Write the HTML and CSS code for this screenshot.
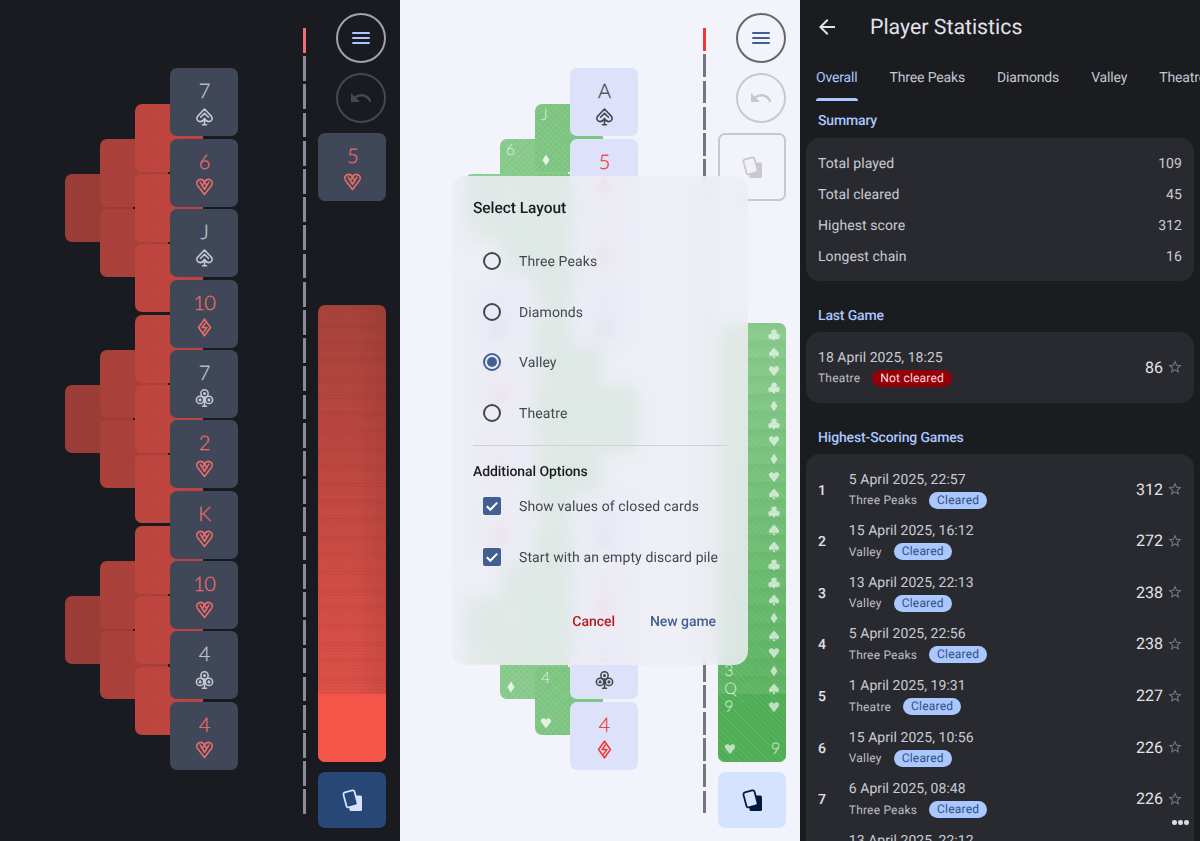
FILE: index.html
```html
<!DOCTYPE html>
<html lang="en">
<head>
<meta charset="utf-8">
<title>Solitaire screens</title>
<link rel="stylesheet" href="styles.css">
</head>
<body>
<svg class="defs" width="0" height="0" aria-hidden="true">
  <symbol id="o-spade" viewBox="0 0 24 24"><path d="M12 2.5 20.5 11.5C23 14.5 21 18.5 17.5 18.5 15.5 18.5 13.5 17 12 14.5 10.5 17 8.5 18.5 6.5 18.5 3 18.5 1 14.5 3.5 11.5ZM7 13 12 8 17 13M12 14.5V22.5M9.5 22.5H14.5"/></symbol>
  <symbol id="o-heart" viewBox="0 0 24 24"><path d="M12 22 3 10.5C.8 7.5 3 3 7 3 9.2 3 11 4.5 12 6.5 13 4.5 14.8 3 17 3 21 3 23.2 7.5 21 10.5ZM6.5 6.5 12 15.5 17.5 6.5M12 6.5 9.5 10.5 12 6.5 14.5 10.5"/></symbol>
  <symbol id="o-diamond" viewBox="0 0 24 24"><path d="M12 1.5 19.5 12 12 22.5 4.5 12ZM13 6.5 9 12H15L11 17.5"/></symbol>
  <symbol id="o-club" viewBox="0 0 24 24"><circle cx="12" cy="6.8" r="4.6"/><circle cx="6.4" cy="15" r="4.6"/><circle cx="17.6" cy="15" r="4.6"/><circle cx="12" cy="6.8" r=".9"/><circle cx="6.4" cy="15" r=".9"/><circle cx="17.6" cy="15" r=".9"/><path d="M12 12V23M9.5 23H14.5"/></symbol>
  <symbol id="f-spade" viewBox="0 0 24 24"><path d="M12 1 21 11C24 15 21 19 17 18.5 15.5 18.3 14 17.5 13 16L14.5 22.5H9.500L11 16C10 17.5 8.500 18.300 7 18.500 3 19 0 15 3 11Z"/></symbol>
  <symbol id="f-heart" viewBox="0 0 24 24"><path d="M12 22.500 3 11C0 7 3 2.500 7 2.500 9 2.500 11 3.500 12 6 13 3.500 15 2.500 17 2.500 21 2.500 24 7 21 11Z"/></symbol>
  <symbol id="f-diamond" viewBox="0 0 24 24"><path d="M12 1 19 12 12 23 5 12Z"/></symbol>
  <symbol id="f-club" viewBox="0 0 24 24"><circle cx="12" cy="6.500" r="5.500"/><circle cx="6" cy="15" r="5.500"/><circle cx="18" cy="15" r="5.500"/><path d="M11 12H13L14.500 22.500H9.500Z"/></symbol>
  <symbol id="i-undo" viewBox="0 0 24 24"><path d="M12.500 8c-2.650 0-5.050.99-6.900 2.600L2 7v9h9l-3.620-3.620c1.390-1.160 3.160-1.880 5.120-1.880 3.540 0 6.550 2.310 7.600 5.500l2.370-.78C21.080 11.030 17.150 8 12.500 8z"/></symbol>
  <symbol id="i-deck" viewBox="0 0 24 24"><path class="deck-back" d="M10 7.500H20.500A1.500 1.500 0 0 1 22 9V21.500A1.500 1.500 0 0 1 20.500 23H11A1.500 1.500 0 0 1 9.500 21.500V19.500Z"/><rect class="deck-front" x="4.800" y="3.200" width="11.500" height="15.500" rx="2" transform="rotate(-15 10.500 11)"/></symbol>
  <symbol id="i-star" viewBox="0 0 24 24"><path d="M22 9.240l-7.190-.62L12 2 9.190 8.630 2 9.240l5.460 4.730L5.820 21 12 17.270 18.180 21l-1.630-7.030L22 9.240zM12 15.400l-3.760 2.270 1-4.280-3.320-2.880 4.380-.38L12 6.100l1.710 4.040 4.380.38-3.320 2.880 1 4.280L12 15.400z"/></symbol>
</svg>

<main class="screens">

<section class="game dark">
  <div class="board">
    <div class="card back c1 r4"></div><div class="card back c1 r10"></div><div class="card back c1 r16"></div>
    <div class="card back c2 r3"></div><div class="card back c2 r5"></div><div class="card back c2 r9"></div><div class="card back c2 r11"></div><div class="card back c2 r15"></div><div class="card back c2 r17"></div>
    <div class="card back c3 r2"></div><div class="card back c3 r4"></div><div class="card back c3 r6"></div><div class="card back c3 r8"></div><div class="card back c3 r10"></div><div class="card back c3 r12"></div><div class="card back c3 r14"></div><div class="card back c3 r16"></div><div class="card back c3 r18"></div>
    <div class="card open c4 r1"><span class="rank">7</span><svg class="suit"><use href="#o-spade"/></svg></div>
    <div class="card open red c4 r3"><span class="rank">6</span><svg class="suit"><use href="#o-heart"/></svg></div>
    <div class="card open c4 r5"><span class="rank">J</span><svg class="suit"><use href="#o-spade"/></svg></div>
    <div class="card open red c4 r7"><span class="rank">10</span><svg class="suit"><use href="#o-diamond"/></svg></div>
    <div class="card open c4 r9"><span class="rank">7</span><svg class="suit"><use href="#o-club"/></svg></div>
    <div class="card open red c4 r11"><span class="rank">2</span><svg class="suit"><use href="#o-heart"/></svg></div>
    <div class="card open red c4 r13"><span class="rank">K</span><svg class="suit"><use href="#o-heart"/></svg></div>
    <div class="card open red c4 r15"><span class="rank">10</span><svg class="suit"><use href="#o-heart"/></svg></div>
    <div class="card open c4 r17"><span class="rank">4</span><svg class="suit"><use href="#o-club"/></svg></div>
    <div class="card open red c4 r19"><span class="rank">4</span><svg class="suit"><use href="#o-heart"/></svg></div>
  </div>
  <div class="dashes"><div class="dash-first"></div></div>
  <div class="side">
    <button class="round menu"><span></span><span></span><span></span></button>
    <button class="round undo"><svg class="undo-icon"><use href="#i-undo"/></svg></button>
    <div class="card open red discard"><span class="rank">5</span><svg class="suit"><use href="#o-heart"/></svg></div>
    <div class="stock stock-22">
      <div class="row"></div><div class="row"></div><div class="row"></div><div class="row"></div><div class="row"></div><div class="row"></div><div class="row"></div><div class="row"></div><div class="row"></div><div class="row"></div><div class="row"></div>
      <div class="row"></div><div class="row"></div><div class="row"></div><div class="row"></div><div class="row"></div><div class="row"></div><div class="row"></div><div class="row"></div><div class="row"></div><div class="row"></div><div class="row"></div>
      <div class="last"></div>
    </div>
    <button class="deal"><svg class="deck-icon"><use href="#i-deck"/></svg></button>
  </div>
</section>

<section class="game light">
  <div class="board">
    <div class="card back c1 r4"><span>K</span><svg class="mini"><use href="#f-club"/></svg></div>
    <div class="card open c1 r7"><span class="rank">8</span><svg class="suit"><use href="#o-club"/></svg></div>
    <div class="card open red c1 r9"><span class="rank">3</span><svg class="suit"><use href="#o-heart"/></svg></div>
    <div class="card open red c1 r11"><span class="rank">9</span><svg class="suit"><use href="#o-diamond"/></svg></div>
    <div class="card open red c1 r13"><span class="rank">2</span><svg class="suit"><use href="#o-heart"/></svg></div>
    <div class="card back c1 r16"><span>5</span><svg class="mini"><use href="#f-club"/></svg></div>
    <div class="card back c2 r3"><span>6</span><svg class="mini"><use href="#f-spade"/></svg></div>
    <div class="card back c2 r5"><span>2</span><svg class="mini"><use href="#f-club"/></svg></div>
    <div class="card back c2 r15"><span>8</span><svg class="mini"><use href="#f-spade"/></svg></div>
    <div class="card back c2 r17"><span>K</span><svg class="mini"><use href="#f-diamond"/></svg></div>
    <div class="card back c3 r2"><span>J</span><svg class="mini"><use href="#f-diamond"/></svg></div>
    <div class="card back c3 r4"><span>7</span><svg class="mini"><use href="#f-heart"/></svg></div>
    <div class="card back c3 r6"><span>3</span><svg class="mini"><use href="#f-club"/></svg></div>
    <div class="card back c3 r8"><span>Q</span><svg class="mini"><use href="#f-spade"/></svg></div>
    <div class="card back c3 r10"><span>A</span><svg class="mini"><use href="#f-heart"/></svg></div>
    <div class="card back c3 r12"><span>6</span><svg class="mini"><use href="#f-club"/></svg></div>
    <div class="card back c3 r14"><span>10</span><svg class="mini"><use href="#f-spade"/></svg></div>
    <div class="card back c3 r16"><span>J</span><svg class="mini"><use href="#f-diamond"/></svg></div>
    <div class="card back c3 r18"><span>4</span><svg class="mini"><use href="#f-heart"/></svg></div>
    <div class="card open c4 r1"><span class="rank">A</span><svg class="suit"><use href="#o-spade"/></svg></div>
    <div class="card open red c4 r3"><span class="rank">5</span><svg class="suit"><use href="#o-diamond"/></svg></div>
    <div class="card open red c4 r5"><span class="rank">7</span><svg class="suit"><use href="#o-heart"/></svg></div>
    <div class="card open c4 r7"><span class="rank">9</span><svg class="suit"><use href="#o-club"/></svg></div>
    <div class="card back c4 r10"><span>K</span><svg class="mini"><use href="#f-spade"/></svg></div>
    <div class="card open c4 r13"><span class="rank">Q</span><svg class="suit"><use href="#o-spade"/></svg></div>
    <div class="card open red c4 r15"><span class="rank">10</span><svg class="suit"><use href="#o-heart"/></svg></div>
    <div class="card open c4 r17"><span class="rank">8</span><svg class="suit"><use href="#o-club"/></svg></div>
    <div class="card open red c4 r19"><span class="rank">4</span><svg class="suit"><use href="#o-diamond"/></svg></div>
  </div>
  <div class="dashes"><div class="dash-first"></div></div>
  <div class="side">
    <button class="round menu"><span></span><span></span><span></span></button>
    <button class="round undo"><svg class="undo-icon"><use href="#i-undo"/></svg></button>
    <div class="empty-pile"><svg class="deck-icon"><use href="#i-deck"/></svg></div>
    <div class="stock stock-21">
      <div class="row"><span>2</span><svg class="mini"><use href="#f-club"/></svg></div>
      <div class="row"><span>K</span><svg class="mini"><use href="#f-spade"/></svg></div>
      <div class="row"><span>3</span><svg class="mini"><use href="#f-heart"/></svg></div>
      <div class="row"><span>9</span><svg class="mini"><use href="#f-club"/></svg></div>
      <div class="row"><span>7</span><svg class="mini"><use href="#f-diamond"/></svg></div>
      <div class="row"><span>4</span><svg class="mini"><use href="#f-club"/></svg></div>
      <div class="row"><span>A</span><svg class="mini"><use href="#f-heart"/></svg></div>
      <div class="row"><span>6</span><svg class="mini"><use href="#f-diamond"/></svg></div>
      <div class="row"><span>J</span><svg class="mini"><use href="#f-heart"/></svg></div>
      <div class="row"><span>5</span><svg class="mini"><use href="#f-spade"/></svg></div>
      <div class="row"><span>Q</span><svg class="mini"><use href="#f-club"/></svg></div>
      <div class="row"><span>2</span><svg class="mini"><use href="#f-spade"/></svg></div>
      <div class="row"><span>8</span><svg class="mini"><use href="#f-spade"/></svg></div>
      <div class="row"><span>10</span><svg class="mini"><use href="#f-club"/></svg></div>
      <div class="row"><span>J</span><svg class="mini"><use href="#f-club"/></svg></div>
      <div class="row"><span>A</span><svg class="mini"><use href="#f-spade"/></svg></div>
      <div class="row"><span>K</span><svg class="mini"><use href="#f-diamond"/></svg></div>
      <div class="row"><span>7</span><svg class="mini"><use href="#f-spade"/></svg></div>
      <div class="row"><span>6</span><svg class="mini"><use href="#f-heart"/></svg></div>
      <div class="row"><span>3</span><svg class="mini"><use href="#f-diamond"/></svg></div>
      <div class="row"><span>Q</span><svg class="mini"><use href="#f-spade"/></svg></div>
      <div class="last">
        <div class="last-line"><span>9</span><svg class="mini"><use href="#f-heart"/></svg></div>
        <div class="last-line"><svg class="mini"><use href="#f-heart"/></svg><span>9</span></div>
      </div>
    </div>
    <button class="deal"><svg class="deck-icon"><use href="#i-deck"/></svg></button>
  </div>

  <div class="dialog">
    <h2 class="dialog-title">Select Layout</h2>
    <div class="option"><span class="radio"></span><span class="option-label">Three Peaks</span></div>
    <div class="option"><span class="radio"></span><span class="option-label">Diamonds</span></div>
    <div class="option"><span class="radio selected"></span><span class="option-label">Valley</span></div>
    <div class="option"><span class="radio"></span><span class="option-label">Theatre</span></div>
    <div class="dialog-rule"></div>
    <h3 class="dialog-sub">Additional Options</h3>
    <div class="option"><span class="check"><svg viewBox="0 0 18 18"><path d="M3.800 9.300 7.300 12.800 14.200 5.600"/></svg></span><span class="option-label">Show values of closed cards</span></div>
    <div class="option"><span class="check"><svg viewBox="0 0 18 18"><path d="M3.800 9.300 7.300 12.800 14.200 5.600"/></svg></span><span class="option-label">Start with an empty discard pile</span></div>
    <div class="dialog-actions"><span class="btn-cancel">Cancel</span><span class="btn-new">New game</span></div>
  </div>
</section>

<section class="stats">
  <header class="stats-head">
    <svg class="back-arrow" viewBox="0 0 24 24"><path d="M20 11H7.830l5.590-5.590L12 4l-8 8 8 8 1.410-1.410L7.830 13H20v-2z"/></svg>
    <h1 class="stats-title">Player Statistics</h1>
  </header>
  <nav class="tabs">
    <span class="tab active">Overall</span><span class="tab">Three Peaks</span><span class="tab">Diamonds</span><span class="tab">Valley</span><span class="tab">Theatre</span>
  </nav>
  <div class="stats-body">
    <h2 class="sec-title sec-first">Summary</h2>
    <div class="panel summary">
      <div class="sum-row"><span>Total played</span><span>109</span></div>
      <div class="sum-row"><span>Total cleared</span><span>45</span></div>
      <div class="sum-row"><span>Highest score</span><span>312</span></div>
      <div class="sum-row"><span>Longest chain</span><span>16</span></div>
    </div>
    <h2 class="sec-title">Last Game</h2>
    <div class="panel games">
      <div class="game-row">
        <div class="info"><div class="date">18 April 2025, 18:25</div><div class="sub"><span>Theatre</span><span class="chip lost">Not cleared</span></div></div>
        <span class="score">86</span><svg class="star"><use href="#i-star"/></svg>
      </div>
    </div>
    <h2 class="sec-title">Highest-Scoring Games</h2>
    <div class="panel games">
      <div class="game-row"><span class="pos">1</span><div class="info"><div class="date">5 April 2025, 22:57</div><div class="sub"><span>Three Peaks</span><span class="chip">Cleared</span></div></div><span class="score">312</span><svg class="star"><use href="#i-star"/></svg></div>
      <div class="game-row"><span class="pos">2</span><div class="info"><div class="date">15 April 2025, 16:12</div><div class="sub"><span>Valley</span><span class="chip">Cleared</span></div></div><span class="score">272</span><svg class="star"><use href="#i-star"/></svg></div>
      <div class="game-row"><span class="pos">3</span><div class="info"><div class="date">13 April 2025, 22:13</div><div class="sub"><span>Valley</span><span class="chip">Cleared</span></div></div><span class="score">238</span><svg class="star"><use href="#i-star"/></svg></div>
      <div class="game-row"><span class="pos">4</span><div class="info"><div class="date">5 April 2025, 22:56</div><div class="sub"><span>Three Peaks</span><span class="chip">Cleared</span></div></div><span class="score">238</span><svg class="star"><use href="#i-star"/></svg></div>
      <div class="game-row"><span class="pos">5</span><div class="info"><div class="date">1 April 2025, 19:31</div><div class="sub"><span>Theatre</span><span class="chip">Cleared</span></div></div><span class="score">227</span><svg class="star"><use href="#i-star"/></svg></div>
      <div class="game-row"><span class="pos">6</span><div class="info"><div class="date">15 April 2025, 10:56</div><div class="sub"><span>Valley</span><span class="chip">Cleared</span></div></div><span class="score">226</span><svg class="star"><use href="#i-star"/></svg></div>
      <div class="game-row"><span class="pos">7</span><div class="info"><div class="date">6 April 2025, 08:48</div><div class="sub"><span>Three Peaks</span><span class="chip">Cleared</span></div></div><span class="score">226</span><svg class="star"><use href="#i-star"/></svg></div>
      <div class="game-row"><span class="pos">8</span><div class="info"><div class="date">13 April 2025, 22:12</div><div class="sub"><span>Valley</span><span class="chip">Cleared</span></div></div><span class="score">225</span><svg class="star"><use href="#i-star"/></svg></div>
    </div>
  </div>
  <div class="more"><span></span><span></span><span></span></div>
</section>

</main>
</body>
</html>
```
FILE: styles.css
```css
* { box-sizing: border-box; }
html, body { margin: 0; padding: 0; height: 841px; overflow: hidden; background: #191b20; }
body { font-family: Roboto, "Liberation Sans", sans-serif; text-rendering: geometricPrecision; }
.defs { position: absolute; }
.screens { display: flex; width: 1200px; height: 841px; }

/* game screens */
.game { position: relative; display: flex; width: 400px; height: 841px; overflow: hidden; background: var(--bg); }
.dark {
  --bg: #191b20; --open: #3f4759; --ink: #c6c8d2; --ink-red: #ee6d69;
  --dash: #8b8c95; --dash-red: #ef6e6e; --dash-len: 24.7px; --dash-step: 28.2px;
  --menu-line: #aac7ff; --ring: #a3a4a9; --ring-off: #47484d; --undo: #47484d;
  --deck-bg: #284777; --deck-ink: #d6e3ff;
}
.light {
  --bg: #f3f4fb; --open: #dde2fa; --ink: #44474f; --ink-red: #f4372e;
  --dash: #75767c; --dash-red: #f4372e; --dash-len: 22.7px; --dash-step: 26.3px;
  --menu-line: #415f91; --ring: #67686c; --ring-off: #c7c8d2; --undo: #c7c8d2;
  --deck-bg: #d6e3ff; --deck-ink: #001b3f;
}
.board {
  display: grid; flex: none;
  grid-template-columns: repeat(5, 35.17px);
  grid-template-rows: repeat(20, 35.2px);
  margin: 68.4px 0 0 64.7px;
  width: 175.85px; height: 704px;
}
.card { width: 68px; height: 68px; border-radius: 7px; align-self: start; justify-self: start; }
.c1 { grid-column: 1 / span 2; } .c2 { grid-column: 2 / span 2; }
.c3 { grid-column: 3 / span 2; } .c4 { grid-column: 4 / span 2; }
.r1 { grid-row: 1 / span 2; } .r2 { grid-row: 2 / span 2; } .r3 { grid-row: 3 / span 2; }
.r4 { grid-row: 4 / span 2; } .r5 { grid-row: 5 / span 2; } .r6 { grid-row: 6 / span 2; }
.r7 { grid-row: 7 / span 2; } .r8 { grid-row: 8 / span 2; } .r9 { grid-row: 9 / span 2; }
.r10 { grid-row: 10 / span 2; } .r11 { grid-row: 11 / span 2; } .r12 { grid-row: 12 / span 2; }
.r13 { grid-row: 13 / span 2; } .r14 { grid-row: 14 / span 2; } .r15 { grid-row: 15 / span 2; }
.r16 { grid-row: 16 / span 2; } .r17 { grid-row: 17 / span 2; } .r18 { grid-row: 18 / span 2; }
.r19 { grid-row: 19 / span 2; }

.open {
  display: flex; flex-direction: column; align-items: center;
  padding-top: 12px; background: var(--open); color: var(--ink);
}
.red { color: var(--ink-red); }
.rank { font-family: Lato, Roboto, sans-serif; font-weight: 300; font-size: 20px; letter-spacing: -.8px; -webkit-text-stroke: .25px currentColor; line-height: 22px; height: 22px; }
.suit { width: 19px; height: 19px; margin-top: 4.500px; fill: none; stroke: currentColor; stroke-width: 2; stroke-linejoin: round; stroke-linecap: round; }
.mini { width: 12px; height: 12px; fill: currentColor; stroke: none; flex: none; }

/* closed cards */
.dark .back {
  background-color: var(--tone);
  background-image: radial-gradient(rgba(0, 0, 0, .07) .8px, transparent 1px);
  background-size: 3px 3px;
}
.dark .c1 { --tone: #9c3d38; } .dark .c2 { --tone: #aa413b; } .dark .c3 { --tone: #bf463f; }
.light .back {
  display: flex; flex-direction: column; justify-content: space-between;
  padding: 1.500px 0 6px 5px; color: rgba(255, 255, 255, .78);
  font-family: Lato, Roboto, sans-serif; font-weight: 300; font-size: 16px; line-height: 20px;
  background-color: var(--tone);
  background-image:
    repeating-linear-gradient(45deg, rgba(255, 255, 255, .07) 0 1px, transparent 1px 4px),
    repeating-linear-gradient(-45deg, rgba(60, 130, 70, .08) 0 1px, transparent 1px 4px);
}
.light .back span { margin-left: 1px; }
.light .c1 { --tone: #8fce92; } .light .c2 { --tone: #88cb8c; } .light .c3, .light .c4 { --tone: #7fc683; }

/* dashed line */
.dashes {
  position: relative; flex: none; width: 3px; height: 785.6px;
  margin: 28.3px 0 0 62.75px;
  background-image: repeating-linear-gradient(to bottom, var(--dash) 0 var(--dash-len), transparent var(--dash-len) var(--dash-step));
}
.dash-first { width: 3px; height: var(--dash-len); background: var(--dash-red); border-radius: 1px; }

/* side column */
.side { display: flex; flex-direction: column; align-items: flex-end; flex: none; width: 68px; margin-left: 12px; padding: 13.3px 0; height: 841px; }
.round { display: flex; flex-direction: column; align-items: center; justify-content: center; width: 50px; height: 50px; padding: 0; border-radius: 50%; background: transparent; }
.menu { gap: 3px; border: 2px solid var(--ring); margin-bottom: 10px; }
.menu span { display: block; width: 18px; height: 2px; background: var(--menu-line); border-radius: 1px; }
.undo { border: 2px solid var(--ring-off); margin-bottom: 10px; }
.undo-icon { width: 24px; height: 24px; fill: var(--undo); }
.discard { flex: none; align-self: stretch; }
.empty-pile {
  display: flex; align-items: center; justify-content: center; flex: none;
  width: 68px; height: 68px; border: 2px solid #c7c8d2; border-radius: 7px;
  --deck-bg: #f0f0f6; --deck-ink: #c7c8d2;
}
.stock { margin-top: auto; width: 68px; border-radius: 7px; overflow: hidden; }
.row { display: flex; align-items: flex-start; justify-content: space-between; height: 17.67px; padding: 6.500px 5px 0 6px; }
.dark .stock { background: linear-gradient(to bottom, #a7433b 0, #bc473f 30%, #d24e45 65%, #e5534a 100%); }
.dark .row {
  background-image:
    linear-gradient(to bottom, rgba(0, 0, 0, .03), transparent 60%),
    linear-gradient(to right, transparent 55%, rgba(0, 0, 0, .07)),
    radial-gradient(rgba(0, 0, 0, .07) .8px, transparent 1px);
  background-size: auto, auto, 3px 3px;
}
.dark .last { height: 68px; background: #f65549; background-image: radial-gradient(rgba(0, 0, 0, .05) .8px, transparent 1px); background-size: 3px 3px; }
.light .stock { background: linear-gradient(to bottom, #8bcc8e 0, #6fbe74 50%, #55b05a 100%); color: rgba(255, 255, 255, .62); font-family: Lato, Roboto, sans-serif; font-weight: 300; font-size: 16px; line-height: 12px; }
.light .row {
  background-image:
    linear-gradient(to bottom, rgba(40, 60, 20, .05), transparent 60%),
    repeating-linear-gradient(45deg, rgba(255, 255, 255, .06) 0 1px, transparent 1px 4px);
}
.light .row .mini { margin-right: 1px; }
.light .row span, .light .last span { color: rgba(255, 255, 255, .82); }
.light .last {
  display: flex; flex-direction: column; justify-content: space-between;
  height: 68px; padding: 7.500px 6px 6.500px 6px; background: #4fae55;
  background-image: repeating-linear-gradient(45deg, rgba(255, 255, 255, .07) 0 1px, transparent 1px 4px);
}
.last-line { display: flex; justify-content: space-between; align-items: center; height: 12px; }
.deal { display: flex; align-items: center; justify-content: center; width: 68px; height: 56px; margin-top: 10px; padding: 0; border: 0; border-radius: 7px; background: var(--deck-bg); }
.deck-icon { width: 24px; height: 24px; }
.deck-back { fill: var(--deck-ink); }
.deck-front { fill: var(--deck-bg); stroke: var(--deck-ink); stroke-width: 1.800; }

/* dialog */
.dialog {
  position: absolute; left: 52px; top: 176px; width: 296px; height: 488.500px;
  padding: 21px; border-radius: 14px; color: #44474f;
  font-size: 14px; letter-spacing: .1px;
  background: rgba(237, 237, 244, .86);
  -webkit-backdrop-filter: blur(8px); backdrop-filter: blur(8px);
}
.dialog-title { margin: 0 0 16.750px; font-size: 15.500px; font-weight: 500; line-height: 22px; letter-spacing: -.05px; color: #1a1c20; }
.dialog-sub { margin: 16px 0 -1px; font-size: 14px; font-weight: 500; line-height: 20px; letter-spacing: -.07px; color: #1a1c20; }
.option { display: flex; align-items: center; gap: 18px; height: 50.500px; padding-left: 10px; line-height: 20px; }
.option-label { padding-top: 2px; }
.radio { flex: none; position: relative; width: 18px; height: 18px; border: 2px solid #44474f; border-radius: 50%; }
.radio.selected { border-color: #415f91; }
.radio.selected::after { content: ""; position: absolute; left: 2px; top: 2px; width: 10px; height: 10px; border-radius: 50%; background: #415f91; }
.check { flex: none; display: block; width: 18px; height: 18px; border-radius: 2px; background: #415f91; }
.check svg { display: block; width: 18px; height: 18px; fill: none; stroke: #fff; stroke-width: 2; }
.dialog-rule { height: 1px; margin-top: 7.250px; background: #cfd0da; }
.dialog-actions { display: flex; justify-content: flex-end; gap: 35px; margin: 30px -2px 0 0; padding-right: 13px; font-weight: 500; line-height: 20px; letter-spacing: -.05px; }
.btn-cancel { color: #ba1a1a; }
.btn-new { color: #415f91; }

/* statistics */
.stats { position: relative; width: 400px; height: 841px; overflow: hidden; background: #1a1c20; color: #e2e2e9; }
.stats-head { display: flex; align-items: center; height: 54px; padding-left: 15px; }
.back-arrow { width: 24px; height: 24px; fill: #e2e2e9; flex: none; }
.stats-title { margin: 2px 0 0 31px; font-size: 21.300px; font-weight: 400; line-height: 28px; }
.tabs { display: flex; gap: 32px; height: 46.500px; padding: 14px 0 0 16px; overflow: hidden; white-space: nowrap; font-size: 14px; font-weight: 400; letter-spacing: -.15px; line-height: 20px; color: #c4c6d0; }
.tab { position: relative; display: block; height: 32.500px; flex: none; }
.tab.active { color: #aac7ff; }
.tab.active::after { content: ""; position: absolute; left: 0; right: 0; bottom: 0; height: 3px; border-radius: 3px 3px 0 0; background: #aac7ff; }
.stats-body { padding: 0 6px; }
.sec-title { margin: 24px 0 6px 12px; padding-top: 1px; font-size: 14px; font-weight: 500; line-height: 20px; letter-spacing: -.15px; color: #aac7ff; }
.sec-first { margin-top: 9.500px; margin-bottom: 6.700px; }
.panel { border-radius: 14px; background: #292a2f; }
.summary { padding: 9.650px 12px; font-size: 14px; letter-spacing: .08px; color: #c9cad3; }
.sum-row { display: flex; justify-content: space-between; align-items: center; height: 31px; padding-top: 2px; }
.games { padding: 9.600px 11px 9.600px 12px; }
.game-row { display: flex; align-items: center; height: 51.600px; }
.pos { width: 30.800px; flex: none; margin-top: 3px; font-size: 14px; font-weight: 500; color: #e2e2e9; }
.info { flex: 1; margin-top: -1px; }
.date { padding-top: 1px; font-size: 14px; line-height: 20px; letter-spacing: .05px; color: #c9cad3; }
.sub { display: flex; align-items: center; gap: 12px; height: 17px; margin-top: 2px; font-size: 12px; letter-spacing: .2px; color: #bcbec8; }
.chip { height: 17px; padding: 0 8px; border-radius: 9px; line-height: 17px; background: #aac7ff; color: #2f4f82; }
.chip.lost { background: #93000a; color: #ffdad6; }
.score { font-size: 16px; font-weight: 400; letter-spacing: 0; color: #e2e2e9; margin-right: 4px; }
.star { width: 16px; height: 16px; fill: #76777e; flex: none; }
.more { position: absolute; right: 11.500px; top: 820px; display: flex; gap: 1.500px; }
.more span { width: 4.500px; height: 4.500px; border-radius: 50%; background: #d9dae2; }
```
